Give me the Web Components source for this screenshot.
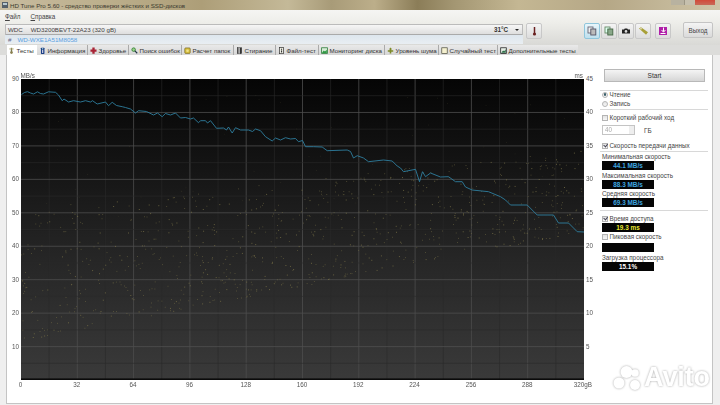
<!DOCTYPE html>
<html lang="ru"><head><meta charset="utf-8"><title>HD Tune Pro</title>
<style>
html,body{margin:0;padding:0;width:720px;height:405px;overflow:hidden;background:#eee}
body{font:6.3px "Liberation Sans",Arial,sans-serif;color:#333}
</style></head><body>
<ht-app></ht-app>
<script>
function def(name,css,html,init){
  customElements.define(name,class extends HTMLElement{
    constructor(){super();const s=this.attachShadow({mode:'open'});
      s.innerHTML='<style>'+css+'</style>'+(typeof html==='function'?html(this):html);}
    connectedCallback(){ if(init&&!this._i){this._i=1;init(this,this.shadowRoot);} }
  });
}
const ICONS={
 therm:'<rect x="3.6" y="1" width="1.8" height="6" fill="#7a7a50"/><circle cx="4.5" cy="7.2" r="1.7" fill="#8a8050"/><path d="M1.5 2.5h6" stroke="#b0a870" stroke-width="1"/>',
 info:'<rect x="2.5" y="1" width="4.5" height="8" rx=".6" fill="#1b3f86"/><rect x="4" y="1.6" width="1.4" height="1.4" fill="#cfe"/><rect x="4" y="3.7" width="1.4" height="4" fill="#dde"/>',
 health:'<path d="M3 .8h3v2.4h2.4v3H6v2.6H3V6.2H.6v-3H3z" fill="#a82436"/>',
 search:'<circle cx="3.4" cy="3.4" r="2.3" fill="#9ad08a" stroke="#2c7a30" stroke-width="1"/><path d="M5 5l3 3" stroke="#234" stroke-width="1.5"/>',
 folder:'<rect x="1" y="1.2" width="7" height="7" rx="1.2" fill="#d8c040" stroke="#6a5a14" stroke-width=".8"/><circle cx="4.5" cy="4.7" r="1.6" fill="#efe28a"/>',
 erase:'<rect x="1.8" y="1" width="5.4" height="7.6" fill="#333" stroke="#111" stroke-width=".5"/><rect x="3" y="1" width="2" height="7.6" fill="#bbb"/>',
 file:'<rect x="1.8" y=".8" width="5.4" height="7.8" fill="#f3f3e8" stroke="#333" stroke-width=".9"/><rect x="3.8" y="2.2" width="1.5" height="1.4" fill="#333"/><rect x="3.8" y="4.4" width="1.5" height="2.6" fill="#333"/>',
 mon:'<rect x=".8" y="1" width="7.4" height="7.2" fill="#d7ecd7" stroke="#2a7a35" stroke-width="1"/><path d="M1.5 7l2-2.4 1.6 1.2L7.5 3.5V7.6H1.5z" fill="#2f9a45"/>',
 noise:'<path d="M4.5.6l2 2.4H5.5v1.2H8L8 6H5.5v2.5h-2V6H1V4.2h2.5V3H2.5z" fill="#7d8a28"/>',
 rand:'<rect x="1" y="1" width="7" height="7.4" fill="#f4f0cf" stroke="#4a4a3a" stroke-width=".9"/>',
 extra:'<rect x=".9" y="1" width="7.2" height="7.4" fill="#e6efe6" stroke="#222" stroke-width="1"/><path d="M1.8 7l2.2-2.6 1.4 1L7.4 3v4.4H1.8z" fill="#2f6f4a"/>'
};
function tIcon(k){return '<svg width="7" height="7" viewBox="0 0 9 9" aria-hidden="true">'+ICONS[k]+'</svg>';}

def('ht-titlebar',`:host{display:flex;align-items:center;height:10px;position:relative;padding-left:1px;gap:1px;overflow:hidden;
  background:linear-gradient(90deg,#c7bb9f 0,#bdb08d 14%,#ad9e78 28%,#c4b998 40%,#a89b78 46%,#bcae8a 52%,#8b7d58 58%,#a39672 63%,#c4b793 72%,#b5a786 84%,#cfc5a8 100%);}
  span{font-size:6.2px;color:#3c3a30;white-space:nowrap}
  .w{margin-left:auto;display:flex;height:5px;align-self:flex-start;margin-right:5px}
  .w i{display:block;height:5px}.a{width:13px;background:#b8b2a0}.b{width:10px;background:#c6c0ae;border-left:1px solid #9c9684}.c{width:20px;background:linear-gradient(#d24a3a,#c86a58)}`,
 `<svg width="8" height="8" viewBox="0 0 8 8" aria-hidden="true"><rect x="1" y="1" width="6" height="6" fill="#55606a"/><rect x="2" y="2" width="4" height="2" fill="#b8c8d0"/></svg><span>HD Tune Pro 5.60 - средство проверки жёстких и SSD-дисков</span><div class="w"><i class="a"></i><i class="b"></i><i class="c"></i></div>`);

def('ht-menu',`:host{display:flex;height:12px;align-items:center;gap:10px;padding-left:5px;background:linear-gradient(#f5f5f3,#eeeeea);font-size:6.3px;color:#444}
  u{text-decoration:underline;text-decoration-thickness:.5px}`,`<span><u>Ф</u>айл</span><span><u>С</u>правка</span>`);

def('ht-select',`:host{display:flex;flex-direction:column;width:518px;flex:none;height:20px;margin-top:2px}
  .t{display:flex;align-items:center;padding:0 2px;font-size:6.2px;color:#444;border:1px solid #bbb;border-bottom-color:#aaa;border-radius:1px;background:linear-gradient(#f6f6f6,#dedede);box-sizing:border-box;height:12px}
  .m{margin-left:8px}.tp{margin-left:auto;font-weight:bold;color:#333;font-size:6.3px}.ar{margin-left:7px;width:0;height:0;border:2px solid transparent;border-top:2.5px solid #222;border-bottom:0;margin-right:1px}
  .s{display:flex;align-items:center;height:9px;padding-left:3px;font-size:6.2px;color:#5aa0e0;background:linear-gradient(#dde6ee,#e9eef2);gap:6px}.h{color:#668}`,
 `<div class="t"><span>WDC</span><span class="m">WD3200BEVT-22A23 (320 gB)</span><span class="tp">31°C</span><span class="ar"></span></div><div class="s"><span class="h">#</span><span>WD-WXE1A51M8058</span></div>`);

def('ht-tool',`:host{display:flex;flex:none;align-items:center;justify-content:center;width:16px;height:16px;box-sizing:border-box;border:1px solid #c8c8c8;border-radius:2px;background:linear-gradient(#f4f4f4,#dcdcdc)}
  :host([on]){border-color:#8fc6dc;background:linear-gradient(#e8f5fb,#bfe0ee)}`,`<slot></slot>`);

def('ht-toolbar',`:host{display:flex;align-items:flex-start;height:23px;padding-left:5px;background:linear-gradient(#eeeeea,#d9d9d6);box-sizing:border-box}
  .g{display:flex;gap:1px;margin-top:1px}.th{margin:1px 0 0 3px}.ts{margin-left:42px}
  .x{margin:0 8px 0 12px;width:30px;height:16px;flex:none;box-sizing:border-box;border:1px solid #c4c4c4;border-radius:2px;background:linear-gradient(#f4f4f4,#dadada);display:flex;align-items:center;justify-content:center;font-size:6.3px;color:#444}
  svg{display:block}`,
 `<ht-select></ht-select>
 <ht-tool class="th"><svg width="9" height="11" viewBox="0 0 9 11"><path d="M4.5 1v6" stroke="#6a2020" stroke-width="1.5"/><circle cx="4.5" cy="8" r="1.6" fill="#6a2020"/></svg></ht-tool>
 <div class="g ts">
 <ht-tool on><svg width="10" height="10" viewBox="0 0 10 10"><rect x="1" y="1" width="5" height="6" fill="#eee" stroke="#667" stroke-width=".9"/><rect x="3.8" y="3" width="5" height="6" fill="#bbb" stroke="#556" stroke-width=".9"/></svg></ht-tool>
 <ht-tool><svg width="10" height="10" viewBox="0 0 10 10"><rect x="1" y="1" width="5" height="6" fill="#dfe" stroke="#686" stroke-width=".9"/><rect x="3.8" y="3" width="5" height="6" fill="#8aa88a" stroke="#464" stroke-width=".9"/></svg></ht-tool>
 <ht-tool><svg width="10" height="10" viewBox="0 0 10 10"><path d="M1 3.4h2l.8-1h2.4l.8 1h2v4.2H1z" fill="#222"/><circle cx="5" cy="5.4" r="1.3" fill="#ddd"/></svg></ht-tool>
 <ht-tool><svg width="11" height="10" viewBox="0 0 11 10"><path d="M1 2.6l2-1.4 7 5-2 2.6z" fill="#a8a038"/><circle cx="3" cy="2.8" r=".7" fill="#fff"/></svg></ht-tool>
 <span style="width:2px"></span>
 <ht-tool><svg width="10" height="10" viewBox="0 0 10 10"><rect x="1" y="1" width="8" height="8" fill="#b020a8"/><path d="M5.5 1.5v4.2M3.6 4l1.9 2.2L7.4 4M2.5 7.5h5" stroke="#fff" stroke-width="1" fill="none"/></svg></ht-tool>
 </div>
 <div class="x">Выход</div>`);

def('ht-tab',`:host{display:flex;flex:none;align-items:center;gap:1.5px;height:10px;padding:0 0 0 2px;box-sizing:border-box;white-space:nowrap;font-size:6.2px;color:#333;border-right:1px solid #aaa;background:linear-gradient(#e9e9e9,#d6d6d6)}
  :host([on]){background:#fff;border-right:0;padding-left:1px}svg{display:block;flex:none}`,
 h=>tIcon(h.getAttribute('i'))+'<slot></slot>');

def('ht-tabs',`:host{display:flex;height:10px;padding-left:7px;background:#dcdcda}`,
 `<ht-tab on i="therm" style="width:30px">Тесты</ht-tab><ht-tab i="info" style="width:51px">Информация</ht-tab><ht-tab i="health" style="width:41px">Здоровье</ht-tab><ht-tab i="search" style="width:53px">Поиск ошибок</ht-tab><ht-tab i="folder" style="width:52px">Расчет папок</ht-tab><ht-tab i="erase" style="width:42px">Стирание</ht-tab><ht-tab i="file" style="width:43px">Файл-тест</ht-tab><ht-tab i="mon" style="width:66px">Мониторинг диска</ht-tab><ht-tab i="noise" style="width:54px">Уровень шума</ht-tab><ht-tab i="rand" style="width:59px">Случайный тест</ht-tab><ht-tab i="extra" style="width:80px;border-right:0">Дополнительные тесты</ht-tab>`);

/* chart */
const PTS=[[21,94.5],[24,92.5],[27,91.7],[30,93],[33,94],[37,91.8],[40,93.5],[43,94],[48,91.8],[55,92.3],[58,95],[61.7,100.7],[63.5,99],[68,102],[73,100.7],[80,102],[85,100.7],[90,102],[92,100.7],[96.7,104],[105,102],[108,105.7],[111.7,102.3],[116,105.5],[121.7,106.7],[125,107.5],[130,109],[135,113],[138,110.7],[146,111.5],[153,115],[157,113],[161.7,116.7],[165,113.5],[170,115],[175,113],[180,118],[185,117.5],[190,119],[193,118],[198,122.7],[200,120.7],[205,120.7],[207,123],[210,120.7],[216,128.3],[223,128],[226,130],[228,127],[231.7,133],[235,127.7],[240,130],[248,130],[252,131.5],[255,129],[260,130.7],[265,136.7],[271.7,141],[275,138],[280,140],[285,137.7],[290,139],[295,138.5],[298,141.7],[302,140.5],[305,146.7],[313,146.7],[321.7,147],[326.7,150.7],[346.7,150],[350,151.5],[353,158],[356.7,155.7],[363,158],[368,161.7],[383,160],[391.7,161],[396.7,166],[400,168],[403,171.7],[415,169.3],[419,181.7],[422,171.7],[425,176.7],[430,173],[440,177],[448,176.7],[455,181.7],[461.7,181.7],[465,187],[471.7,190],[488,191.7],[500,196.7],[505,200],[510,205],[526.7,205],[536.7,215],[553,215],[558,223],[568,223],[576.7,231.7],[583.5,232]];
const L=20.5,T=79,W=563.5,H=301;
def('ht-chart',`:host{display:block;position:relative;width:${W}px;height:${H}px;flex:none}
  svg{display:block}
  span{position:absolute;font-size:6.3px;line-height:8px;color:#555;white-space:nowrap}
  .l{right:100%;margin-right:1.5px;transform:translateY(-4px)}
  .r{left:100%;margin-left:2px;transform:translateY(-4px)}
  .b{top:100%;margin-top:1px;transform:translateX(-50%)}
  .u{top:-7px}`,
 `<svg id="s" width="${W}" height="${H}" viewBox="0 0 ${W} ${H}"></svg>`,
 (h,r)=>{
  const s=r.getElementById('s');let o='<defs><linearGradient id="g" x1="0" y1="0" x2="0" y2="1"><stop offset="0" stop-color="#050505"/><stop offset=".25" stop-color="#121212"/><stop offset=".6" stop-color="#262626"/><stop offset="1" stop-color="#3a3a3a"/></linearGradient></defs>';
  o+=`<rect width="${W}" height="${H}" fill="url(#g)"/>`;
  const dx=56.3/2,dy=33.45/2;
  for(let i=1;i<20;i++){const x=i*dx;const maj=i%2==0;o+=`<path d="M${x} 0V${H}" stroke="${maj?'#4c4c4c':'#2a2a2a'}" stroke-width="${maj?.8:.6}"/>`;}
  for(let i=1;i<18;i++){const y=i*dy;const maj=i%2==0;o+=`<path d="M0 ${y}H${W}" stroke="${maj?'#4e4e4e':'#2a2a2a'}" stroke-width="${maj?.8:.6}"/>`;}
  let seed=12345;const R=()=>(seed=(seed*16807)%2147483647)/2147483647;
  let d='';
  for(let i=0;i<850;i++){const x=R()*W;const t=x/W;
    const top=130-60*t, bot=262-110*t;
    const y=bot-Math.pow(R(),1.25)*(bot-top);
    const big=R()<.3;d+=`<rect x="${x.toFixed(1)}" y="${y.toFixed(1)}" width="${big?1:.8}" height="${big?1:.8}"/>`;}
  for(let i=0;i<60;i++){d+=`<rect x="${(R()*W).toFixed(1)}" y="${(10+R()*130).toFixed(1)}" width=".7" height=".7" opacity=".4"/>`;}
  o+=`<g fill="#7a7248" opacity=".75">${d}</g>`;
  o+=`<rect y="${H-1.6}" width="${W}" height="1.6" fill="#0a0a0a"/>`;
  o+=`<polyline fill="none" stroke="#2f7f9f" stroke-width=".9" points="${PTS.map(p=>(p[0]-L)+','+(p[1]-T)).join(' ')}"/>`;
  s.innerHTML=o;
  let t='';
  for(let i=0;i<9;i++){const y=i*33.45;t+=`<span class="l" style="top:${y}px">${90-i*10}</span><span class="r" style="top:${y}px">${45-i*5}</span>`;}
  [0,32,64,96,128,160,192,224,256,288].forEach((v,i)=>{t+=`<span class="b" style="left:${i*56.3}px">${v}</span>`;});
  t+=`<span class="b" style="right:-8px;left:auto;transform:none">320gB</span><span class="u" style="left:0">MB/s</span><span class="u" style="right:1px">ms</span>`;
  r.appendChild(Object.assign(document.createElement('div'),{innerHTML:t}));
 });

def('ht-check',`:host{display:flex;align-items:center;gap:1.5px;height:9px;font-size:6.3px;color:#444;white-space:nowrap}
  i{display:block;width:6px;height:6px;box-sizing:border-box;border:1px solid #b4b4b4;background:linear-gradient(#e4e4e4,#f6f6f6);position:relative;flex:none}
  :host([round]) i{border-radius:50%}
  :host([on]) i::after{content:"";position:absolute;left:.5px;top:-.5px;width:2.4px;height:3.4px;border:solid #445;border-width:0 1px 1px 0;transform:rotate(38deg)}
  :host([round][on]) i::after{left:.7px;top:.7px;width:2.6px;height:2.6px;border:0;background:#3a5f6a;border-radius:50%;transform:none}`,
 `<i></i><slot></slot>`);

def('ht-readout',`:host{display:block;width:52px;height:9px;line-height:9px;background:#050505;text-align:center;font-weight:bold;font-size:6.4px;color:var(--c,#fff)}`,`<slot></slot>`);
def('ht-label',`:host{display:block;height:9px;line-height:9px;font-size:6.3px;color:#444;white-space:nowrap}`,`<slot></slot>`);
def('ht-rule',`:host{display:block;height:1px;background:#d8d8d8;width:108px;margin-left:-2px}`,``);

def('ht-side',`:host{display:flex;flex-direction:column;width:108px;padding-left:2px;flex:none;box-sizing:border-box}
  .start{width:101px;height:13px;margin:0 0 0 2px;box-sizing:border-box;border:1px solid #b8b8b8;background:linear-gradient(#f4f4f4,#d6d6d6);font-size:6.6px;color:#333;display:flex;align-items:center;justify-content:center}
  .spin{display:flex;align-items:center;height:10px;margin:3px 0 6px 0;font-size:6.3px;color:#444}
  .box{width:33px;height:10px;box-sizing:border-box;border:1px solid #c4c4c4;color:#aaa;padding-left:2px;line-height:8px;position:relative}
  .box::after{content:"";position:absolute;right:0;top:0;bottom:0;width:5px;background:linear-gradient(#eee 45%,#999 50%,#eee 55%)}
  .gb{margin-left:9px}`,
 `<div class="start">Start</div>
  <ht-rule style="margin-top:8px"></ht-rule>
  <ht-check round on style="margin-top:-1px">Чтение</ht-check>
  <ht-check round>Запись</ht-check>
  <ht-rule style="margin-top:1px"></ht-rule>
  <ht-check style="margin-top:3px">Короткий рабочий ход</ht-check>
  <div class="spin"><div class="box">40</div><span class="gb">ГБ</span></div>
  <ht-check on>Скорость передачи данных</ht-check>
  <ht-rule style="margin-top:1px"></ht-rule>
  <ht-label>Минимальная скорость</ht-label>
  <ht-readout style="--c:#3da6e0">44.1 MB/s</ht-readout>
  <ht-label style="margin-top:1px">Максимальная скорость</ht-label>
  <ht-readout style="--c:#3da6e0">88.3 MB/s</ht-readout>
  <ht-label>Средняя скорость</ht-label>
  <ht-readout style="--c:#3da6e0">69.3 MB/s</ht-readout>
  <ht-rule style="margin-top:3px"></ht-rule>
  <ht-check on style="margin-top:3px">Время доступа</ht-check>
  <ht-readout style="--c:#e8e830">19.3 ms</ht-readout>
  <ht-check>Пиковая скорость</ht-check>
  <ht-readout style="margin-top:2px"></ht-readout>
  <ht-label style="margin-top:1px">Загрузка процессора</ht-label>
  <ht-readout>15.1%</ht-readout>`);

def('ht-avito',`:host{position:absolute;left:613px;top:362px;display:flex;align-items:center;color:#fff;pointer-events:none;filter:drop-shadow(0 0 .8px rgba(130,130,130,.7))}
  span{font:bold 27px/30px "Liberation Sans",Arial,sans-serif;margin-left:1px;letter-spacing:-.1px}svg{display:block}`,
 `<svg width="30" height="30" viewBox="0 0 30 30" aria-hidden="true"><circle cx="6" cy="21" r="5.5" fill="#fff"/><circle cx="13.5" cy="10" r="6" fill="#fff"/><circle cx="22" cy="23" r="5" fill="#fff"/><circle cx="22" cy="11" r="3.8" fill="#fff"/></svg><span>Avito</span>`);

def('ht-app',`:host{display:flex;flex-direction:column;position:relative;width:720px;height:405px;overflow:hidden;background:#efefef;filter:blur(.35px)}
  .panel{flex:1;margin:0 7px 1px 6px;background:#fff;border:solid #c4c4c4;border-width:0 1px 1px 1px;display:flex;align-items:flex-start;box-sizing:border-box}
  ht-chart{margin:24px 0 0 13.5px}
  ht-side{margin:14px 0 0 16px}`,
 `<ht-titlebar></ht-titlebar><ht-menu></ht-menu><ht-toolbar></ht-toolbar><ht-tabs></ht-tabs>
  <div class="panel"><ht-chart></ht-chart><ht-side></ht-side></div><ht-avito></ht-avito>`);
</script>
</body></html>
